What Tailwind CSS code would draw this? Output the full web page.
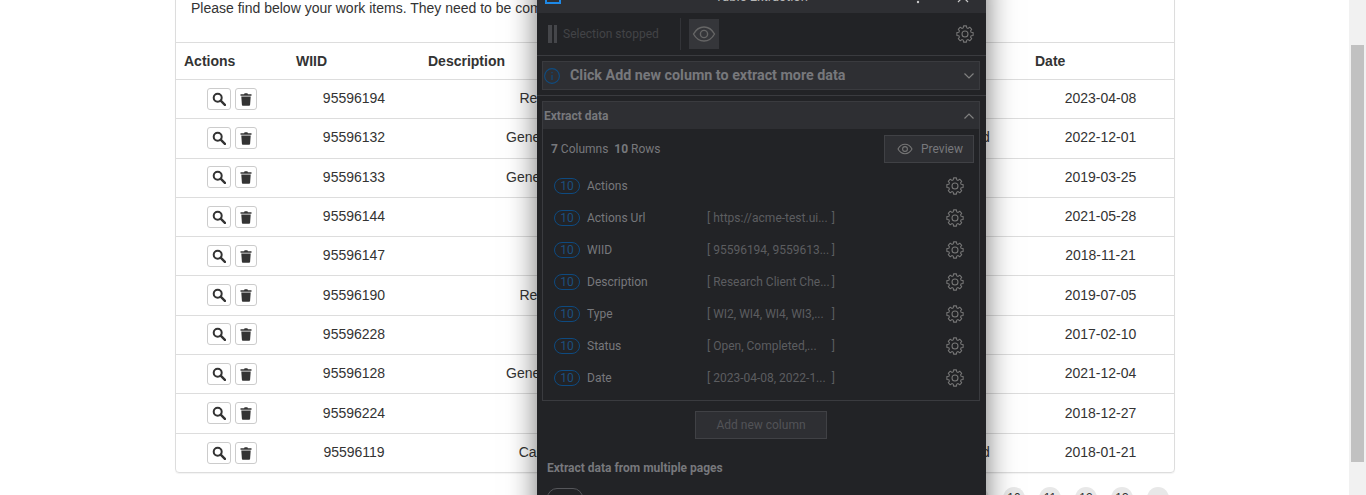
<!doctype html>
<html>
<head>
<meta charset="utf-8">
<script src="https://cdn.jsdelivr.net/npm/@tailwindcss/browser@4"></script>
<title>Work items</title>
</head>
<body class="h-[495px] overflow-hidden bg-white">
<div class="flex h-[495px] overflow-hidden">
  <main class="relative flex-1 overflow-hidden font-['Liberation_Sans',Arial,sans-serif] text-sm text-[#333]">
    <div class="ml-[175px] mt-[-31px] w-[1000px] rounded-[4px] border border-[#ddd] shadow-[0_1px_1px_rgba(0,0,0,0.05)]">
      <div class="h-[73px] border-b border-[#ddd] px-[15px] pt-[28px] leading-5 whitespace-nowrap">Please find below your work items. They need to be completed in the given order.</div>
      <div class="grid h-[37px] grid-cols-[112px_132px_342px_125px_140px_147px] items-center border-b border-[#ddd] font-bold">
        <div class="pl-2">Actions</div><div class="pl-2">WIID</div><div class="pl-2">Description</div><div class="pl-2">Type</div><div class="pl-2">Status</div><div class="pl-2">Date</div>
      </div>
      <div class="grid h-[39.3px] grid-cols-[112px_132px_342px_125px_140px_147px] items-center border-b border-[#ddd] pb-[2px] text-center">
        <div class="mt-px flex justify-center gap-1"><button class="flex h-[22px] w-6 items-center justify-center rounded-[3px] border border-[#ccc]"><svg class="h-3.5 w-3.5" viewBox="0 0 14 14" fill="none" stroke="#333" stroke-width="2"><circle cx="5.7" cy="5.7" r="4"/><path d="M8.7 8.700l4.200 4.200" stroke-linecap="round" stroke-width="2.400"/></svg></button><button class="flex h-[22px] w-[22px] items-center justify-center rounded-[3px] border border-[#ccc]"><svg class="h-3.5 w-3.5" viewBox="0 0 14 14" fill="#333"><path d="M1.500 2.200h3.600l.5-1h2.800l.5 1h3.600v1.600h-11zM2.300 4.600h9.400l-.6 8.200c0 .5-.4.9-.9.9H3.800c-.5 0-.9-.4-.9-.9z"/></svg></button></div>
        <div>95596194</div><div>Research Client Check</div><div>WI2</div><div>Open</div><div>2023-04-08</div>
      </div>
      <div class="grid h-[39.3px] grid-cols-[112px_132px_342px_125px_140px_147px] items-center border-b border-[#ddd] pb-[2px] text-center">
        <div class="mt-px flex justify-center gap-1"><button class="flex h-[22px] w-6 items-center justify-center rounded-[3px] border border-[#ccc]"><svg class="h-3.5 w-3.5" viewBox="0 0 14 14" fill="none" stroke="#333" stroke-width="2"><circle cx="5.7" cy="5.7" r="4"/><path d="M8.7 8.700l4.200 4.200" stroke-linecap="round" stroke-width="2.400"/></svg></button><button class="flex h-[22px] w-[22px] items-center justify-center rounded-[3px] border border-[#ccc]"><svg class="h-3.5 w-3.5" viewBox="0 0 14 14" fill="#333"><path d="M1.500 2.200h3.600l.5-1h2.800l.5 1h3.600v1.600h-11zM2.300 4.600h9.400l-.6 8.200c0 .5-.4.9-.9.9H3.800c-.5 0-.9-.4-.9-.9z"/></svg></button></div>
        <div>95596132</div><div class="pr-1">Generate Client Statement</div><div>WI4</div><div class="pr-[2px]">Completed</div><div>2022-12-01</div>
      </div>
      <div class="grid h-[39.3px] grid-cols-[112px_132px_342px_125px_140px_147px] items-center border-b border-[#ddd] pb-[2px] text-center">
        <div class="mt-px flex justify-center gap-1"><button class="flex h-[22px] w-6 items-center justify-center rounded-[3px] border border-[#ccc]"><svg class="h-3.5 w-3.5" viewBox="0 0 14 14" fill="none" stroke="#333" stroke-width="2"><circle cx="5.7" cy="5.7" r="4"/><path d="M8.7 8.700l4.200 4.200" stroke-linecap="round" stroke-width="2.400"/></svg></button><button class="flex h-[22px] w-[22px] items-center justify-center rounded-[3px] border border-[#ccc]"><svg class="h-3.5 w-3.5" viewBox="0 0 14 14" fill="#333"><path d="M1.500 2.200h3.600l.5-1h2.800l.5 1h3.600v1.600h-11zM2.300 4.600h9.400l-.6 8.200c0 .5-.4.9-.9.9H3.800c-.5 0-.9-.4-.9-.9z"/></svg></button></div>
        <div>95596133</div><div class="pr-1">Generate Client Statement</div><div>WI4</div><div>Open</div><div>2019-03-25</div>
      </div>
      <div class="grid h-[39.3px] grid-cols-[112px_132px_342px_125px_140px_147px] items-center border-b border-[#ddd] pb-[2px] text-center">
        <div class="mt-px flex justify-center gap-1"><button class="flex h-[22px] w-6 items-center justify-center rounded-[3px] border border-[#ccc]"><svg class="h-3.5 w-3.5" viewBox="0 0 14 14" fill="none" stroke="#333" stroke-width="2"><circle cx="5.7" cy="5.7" r="4"/><path d="M8.7 8.700l4.200 4.200" stroke-linecap="round" stroke-width="2.400"/></svg></button><button class="flex h-[22px] w-[22px] items-center justify-center rounded-[3px] border border-[#ccc]"><svg class="h-3.5 w-3.5" viewBox="0 0 14 14" fill="#333"><path d="M1.500 2.200h3.600l.5-1h2.800l.5 1h3.600v1.600h-11zM2.300 4.600h9.400l-.6 8.200c0 .5-.4.9-.9.9H3.800c-.5 0-.9-.4-.9-.9z"/></svg></button></div>
        <div>95596144</div><div>Client Check</div><div>WI3</div><div>Open</div><div>2021-05-28</div>
      </div>
      <div class="grid h-[39.3px] grid-cols-[112px_132px_342px_125px_140px_147px] items-center border-b border-[#ddd] pb-[2px] text-center">
        <div class="mt-px flex justify-center gap-1"><button class="flex h-[22px] w-6 items-center justify-center rounded-[3px] border border-[#ccc]"><svg class="h-3.5 w-3.5" viewBox="0 0 14 14" fill="none" stroke="#333" stroke-width="2"><circle cx="5.7" cy="5.7" r="4"/><path d="M8.7 8.700l4.200 4.200" stroke-linecap="round" stroke-width="2.400"/></svg></button><button class="flex h-[22px] w-[22px] items-center justify-center rounded-[3px] border border-[#ccc]"><svg class="h-3.5 w-3.5" viewBox="0 0 14 14" fill="#333"><path d="M1.500 2.200h3.600l.5-1h2.800l.5 1h3.600v1.600h-11zM2.300 4.600h9.400l-.6 8.200c0 .5-.4.9-.9.9H3.800c-.5 0-.9-.4-.9-.9z"/></svg></button></div>
        <div>95596147</div><div>Client Check</div><div>WI1</div><div>Open</div><div>2018-11-21</div>
      </div>
      <div class="grid h-[39.3px] grid-cols-[112px_132px_342px_125px_140px_147px] items-center border-b border-[#ddd] pb-[2px] text-center">
        <div class="mt-px flex justify-center gap-1"><button class="flex h-[22px] w-6 items-center justify-center rounded-[3px] border border-[#ccc]"><svg class="h-3.5 w-3.5" viewBox="0 0 14 14" fill="none" stroke="#333" stroke-width="2"><circle cx="5.7" cy="5.7" r="4"/><path d="M8.7 8.700l4.200 4.200" stroke-linecap="round" stroke-width="2.400"/></svg></button><button class="flex h-[22px] w-[22px] items-center justify-center rounded-[3px] border border-[#ccc]"><svg class="h-3.5 w-3.5" viewBox="0 0 14 14" fill="#333"><path d="M1.500 2.200h3.600l.5-1h2.800l.5 1h3.600v1.600h-11zM2.300 4.600h9.400l-.6 8.200c0 .5-.4.9-.9.9H3.800c-.5 0-.9-.4-.9-.9z"/></svg></button></div>
        <div>95596190</div><div>Research Client Check</div><div>WI2</div><div>Open</div><div>2019-07-05</div>
      </div>
      <div class="grid h-[39.3px] grid-cols-[112px_132px_342px_125px_140px_147px] items-center border-b border-[#ddd] pb-[2px] text-center">
        <div class="mt-px flex justify-center gap-1"><button class="flex h-[22px] w-6 items-center justify-center rounded-[3px] border border-[#ccc]"><svg class="h-3.5 w-3.5" viewBox="0 0 14 14" fill="none" stroke="#333" stroke-width="2"><circle cx="5.7" cy="5.7" r="4"/><path d="M8.7 8.700l4.200 4.200" stroke-linecap="round" stroke-width="2.400"/></svg></button><button class="flex h-[22px] w-[22px] items-center justify-center rounded-[3px] border border-[#ccc]"><svg class="h-3.5 w-3.5" viewBox="0 0 14 14" fill="#333"><path d="M1.500 2.200h3.600l.5-1h2.800l.5 1h3.600v1.600h-11zM2.300 4.600h9.400l-.6 8.200c0 .5-.4.9-.9.9H3.800c-.5 0-.9-.4-.9-.9z"/></svg></button></div>
        <div>95596228</div><div>Client Check</div><div>WI3</div><div>Open</div><div>2017-02-10</div>
      </div>
      <div class="grid h-[39.3px] grid-cols-[112px_132px_342px_125px_140px_147px] items-center border-b border-[#ddd] pb-[2px] text-center">
        <div class="mt-px flex justify-center gap-1"><button class="flex h-[22px] w-6 items-center justify-center rounded-[3px] border border-[#ccc]"><svg class="h-3.5 w-3.5" viewBox="0 0 14 14" fill="none" stroke="#333" stroke-width="2"><circle cx="5.7" cy="5.7" r="4"/><path d="M8.7 8.700l4.200 4.200" stroke-linecap="round" stroke-width="2.400"/></svg></button><button class="flex h-[22px] w-[22px] items-center justify-center rounded-[3px] border border-[#ccc]"><svg class="h-3.5 w-3.5" viewBox="0 0 14 14" fill="#333"><path d="M1.500 2.200h3.600l.5-1h2.800l.5 1h3.600v1.600h-11zM2.300 4.600h9.400l-.6 8.200c0 .5-.4.9-.9.9H3.800c-.5 0-.9-.4-.9-.9z"/></svg></button></div>
        <div>95596128</div><div class="pr-1">Generate Client Statement</div><div>WI5</div><div>Open</div><div>2021-12-04</div>
      </div>
      <div class="grid h-[39.3px] grid-cols-[112px_132px_342px_125px_140px_147px] items-center border-b border-[#ddd] pb-[2px] text-center">
        <div class="mt-px flex justify-center gap-1"><button class="flex h-[22px] w-6 items-center justify-center rounded-[3px] border border-[#ccc]"><svg class="h-3.5 w-3.5" viewBox="0 0 14 14" fill="none" stroke="#333" stroke-width="2"><circle cx="5.7" cy="5.7" r="4"/><path d="M8.7 8.700l4.200 4.200" stroke-linecap="round" stroke-width="2.400"/></svg></button><button class="flex h-[22px] w-[22px] items-center justify-center rounded-[3px] border border-[#ccc]"><svg class="h-3.5 w-3.5" viewBox="0 0 14 14" fill="#333"><path d="M1.500 2.200h3.600l.5-1h2.800l.5 1h3.600v1.600h-11zM2.300 4.600h9.400l-.6 8.200c0 .5-.4.9-.9.9H3.800c-.5 0-.9-.4-.9-.9z"/></svg></button></div>
        <div>95596224</div><div>Client Check</div><div>WI1</div><div>Open</div><div>2018-12-27</div>
      </div>
      <div class="grid h-[38.3px] grid-cols-[112px_132px_342px_125px_140px_147px] items-center pb-[1px] text-center">
        <div class="mt-px flex justify-center gap-1"><button class="flex h-[22px] w-6 items-center justify-center rounded-[3px] border border-[#ccc]"><svg class="h-3.5 w-3.5" viewBox="0 0 14 14" fill="none" stroke="#333" stroke-width="2"><circle cx="5.7" cy="5.7" r="4"/><path d="M8.7 8.700l4.200 4.200" stroke-linecap="round" stroke-width="2.400"/></svg></button><button class="flex h-[22px] w-[22px] items-center justify-center rounded-[3px] border border-[#ccc]"><svg class="h-3.5 w-3.5" viewBox="0 0 14 14" fill="#333"><path d="M1.500 2.200h3.600l.5-1h2.800l.5 1h3.600v1.600h-11zM2.300 4.600h9.400l-.6 8.200c0 .5-.4.9-.9.9H3.800c-.5 0-.9-.4-.9-.9z"/></svg></button></div>
        <div>95596119</div><div class="pr-[10px]">Calculate Client Hash</div><div>WI2</div><div class="pr-[2px]">Completed</div><div>2018-01-21</div>
      </div>
    </div>
    <div class="ml-[967px] mt-[14px] flex gap-[14px] text-center text-xs leading-[22px]">
      <span class="h-[22px] w-[22px] rounded-full bg-[#e8e8e8]">9</span><span class="h-[22px] w-[22px] rounded-full bg-[#e8e8e8]">10</span><span class="h-[22px] w-[22px] rounded-full bg-[#e8e8e8]">11</span><span class="h-[22px] w-[22px] rounded-full bg-[#e8e8e8]">12</span><span class="h-[22px] w-[22px] rounded-full bg-[#e8e8e8]">13</span><span class="h-[22px] w-[22px] rounded-full bg-[#e8e8e8]"></span>
    </div>

    <section class="absolute left-[537px] top-[-27px] h-[560px] w-[449px] bg-[#222326] font-['Roboto',sans-serif] text-xs shadow-[0_0_28px_rgba(0,0,0,0.55)]">
      <header class="relative flex h-10 items-end justify-center bg-[#2e2f33] pb-2 text-[13px] text-[#b5b5b5]">
        <svg class="absolute bottom-[9px] left-2 h-4 w-4" viewBox="0 0 16 16" fill="none" stroke="#1e88e5" stroke-width="2"><rect x="1" y="1" width="14" height="14"/><path d="M5 5v6h3"/></svg>
        <span>Table Extraction</span>
        <svg class="absolute bottom-2 left-[379px] h-4 w-1" viewBox="0 0 4 16" fill="#c8c8c8"><circle cx="2" cy="3" r="1.200"/><circle cx="2" cy="8" r="1.200"/><circle cx="2" cy="13" r="1.200"/></svg>
        <svg class="absolute bottom-[10px] left-[420px] h-3 w-3" viewBox="0 0 12 12" stroke="#c8c8c8" stroke-width="1.200"><path d="M1 1l10 10M11 1L1 11"/></svg>
      </header>
      <div class="flex h-[43px] items-center border-b border-[#3a3b3f] pl-[11px] pr-3">
        <div class="flex h-[18px] w-[9px] justify-between"><span class="w-[3.5px] bg-[#45464a]"></span><span class="w-[3.5px] bg-[#45464a]"></span></div>
        <span class="ml-1.5 w-[95px] whitespace-nowrap text-xs text-[#424347]">Selection stopped</span>
        <span class="ml-[22px] h-8 w-px bg-[#333438]"></span>
        <span class="ml-2 flex h-[30px] w-[30px] items-center justify-center bg-[#35363a]">
          <svg class="h-[24px] w-[24px]" viewBox="0 0 24 24" fill="none" stroke="#666" stroke-width="1.400"><path d="M1.500 12C4 7.500 7.500 5 12 5s8 2.500 10.500 7C20 16.500 16.500 19 12 19S4 16.500 1.500 12z"/><circle cx="12" cy="12" r="3.600"/></svg>
        </span>
        <svg class="ml-auto h-[18px] w-[18px]" viewBox="0 0 24 24" fill="none" stroke="#777" stroke-width="1.400" stroke-linejoin="round"><path d="M9.660 3.830L10.090 1.170H13.910L14.340 3.830L16.120 4.570L18.310 2.990L21.010 5.690L19.430 7.880L20.170 9.660L22.830 10.090V13.910L20.170 14.340L19.430 16.120L21.010 18.310L18.310 21.010L16.120 19.430L14.340 20.170L13.910 22.830H10.090L9.660 20.170L7.880 19.430L5.690 21.010L2.990 18.310L4.570 16.120L3.830 14.340L1.170 13.910V10.090L3.830 9.660L4.570 7.880L2.990 5.690L5.690 2.990L7.880 4.570Z"/><circle cx="12" cy="12" r="4"/></svg>
      </div>
      <div class="ml-[5px] mr-[6px] mt-[5px] flex h-[29px] items-center border border-[#3a3b3f] bg-[#2e2f33] pr-[4px]">
        <svg class="ml-px h-4 w-4" viewBox="0 0 16 16" fill="none" stroke="#0f4c81" stroke-width="1.100"><circle cx="8" cy="8" r="7.400"/><path d="M8 7v5M8 4v1.200"/></svg>
        <span class="ml-[10px] text-[14.3px] font-bold text-[#77787c]">Click Add new column to extract more data</span>
        <svg class="ml-auto h-3 w-3" viewBox="0 0 12 12" fill="none" stroke="#808080" stroke-width="1.200"><path d="M1.500 3.500 6 8l4.500-4.500"/></svg>
      </div>
      <div class="mt-[5px] h-px bg-[#3a3b3f]"></div>
      <div class="ml-[5px] mr-[6px] mt-[5px] h-[300px] border border-[#3a3b3f]">
        <div class="flex h-[27px] items-center bg-[#2e2f33] pl-px pr-1">
          <span class="font-bold text-[#77787c]">Extract data</span>
          <svg class="ml-auto h-3 w-3" viewBox="0 0 12 12" fill="none" stroke="#808080" stroke-width="1.200"><path d="M1.500 8.500 6 4l4.500 4.500"/></svg>
        </div>
        <div class="flex h-[40px] items-center justify-between pl-2 pr-[5px] text-[#77787c]">
          <span><b>7</b> Columns &nbsp;<b>10</b> Rows</span>
          <span class="flex h-7 w-[90px] items-center border border-[#404145] bg-[#2e2f33] pl-3">
            <svg class="h-4 w-4" viewBox="0 0 24 24" fill="none" stroke="#777" stroke-width="1.600"><path d="M1.500 12C4 7.500 7.500 5 12 5s8 2.500 10.500 7C20 16.500 16.500 19 12 19S4 16.500 1.500 12z"/><circle cx="12" cy="12" r="3.600"/></svg>
            <span class="ml-2">Preview</span>
          </span>
        </div>
        <ul class="pl-[11px] pr-[15px] pt-[1px] text-[#77787c]">
          <li class="flex h-8 items-center"><span class="flex h-4 w-[26px] items-center justify-center rounded-full border border-[#0e4a80] text-[#1d4f7e]">10</span><span class="ml-[7px] w-[120px]">Actions</span><span class="w-[128px]"></span><svg class="ml-auto h-[18px] w-[18px]" viewBox="0 0 24 24" fill="none" stroke="#777" stroke-width="1.400" stroke-linejoin="round"><path d="M9.660 3.830L10.090 1.170H13.910L14.340 3.830L16.120 4.570L18.310 2.990L21.010 5.690L19.430 7.880L20.170 9.660L22.830 10.090V13.910L20.170 14.340L19.430 16.120L21.010 18.310L18.310 21.010L16.120 19.430L14.340 20.170L13.910 22.830H10.090L9.660 20.170L7.880 19.430L5.690 21.010L2.990 18.310L4.570 16.120L3.830 14.340L1.170 13.910V10.090L3.830 9.660L4.570 7.880L2.990 5.690L5.690 2.990L7.880 4.570Z"/><circle cx="12" cy="12" r="4"/></svg></li>
          <li class="flex h-8 items-center"><span class="flex h-4 w-[26px] items-center justify-center rounded-full border border-[#0e4a80] text-[#1d4f7e]">10</span><span class="ml-[7px] w-[120px]">Actions Url</span><span class="flex w-[128px] justify-between whitespace-nowrap text-[#5c5d60]"><span>[ https://acme-test.ui...</span><span>]</span></span><svg class="ml-auto h-[18px] w-[18px]" viewBox="0 0 24 24" fill="none" stroke="#777" stroke-width="1.400" stroke-linejoin="round"><path d="M9.660 3.830L10.090 1.170H13.910L14.340 3.830L16.120 4.570L18.310 2.990L21.010 5.690L19.430 7.880L20.170 9.660L22.830 10.090V13.910L20.170 14.340L19.430 16.120L21.010 18.310L18.310 21.010L16.120 19.430L14.340 20.170L13.910 22.830H10.090L9.660 20.170L7.880 19.430L5.690 21.010L2.990 18.310L4.570 16.120L3.830 14.340L1.170 13.910V10.090L3.830 9.660L4.570 7.880L2.990 5.690L5.690 2.990L7.880 4.570Z"/><circle cx="12" cy="12" r="4"/></svg></li>
          <li class="flex h-8 items-center"><span class="flex h-4 w-[26px] items-center justify-center rounded-full border border-[#0e4a80] text-[#1d4f7e]">10</span><span class="ml-[7px] w-[120px]">WIID</span><span class="flex w-[128px] justify-between whitespace-nowrap text-[#5c5d60]"><span>[ 95596194, 9559613...</span><span>]</span></span><svg class="ml-auto h-[18px] w-[18px]" viewBox="0 0 24 24" fill="none" stroke="#777" stroke-width="1.400" stroke-linejoin="round"><path d="M9.660 3.830L10.090 1.170H13.910L14.340 3.830L16.120 4.570L18.310 2.990L21.010 5.690L19.430 7.880L20.170 9.660L22.830 10.090V13.910L20.170 14.340L19.430 16.120L21.010 18.310L18.310 21.010L16.120 19.430L14.340 20.170L13.910 22.830H10.090L9.660 20.170L7.880 19.430L5.690 21.010L2.990 18.310L4.570 16.120L3.830 14.340L1.170 13.910V10.090L3.830 9.660L4.570 7.880L2.990 5.690L5.690 2.990L7.880 4.570Z"/><circle cx="12" cy="12" r="4"/></svg></li>
          <li class="flex h-8 items-center"><span class="flex h-4 w-[26px] items-center justify-center rounded-full border border-[#0e4a80] text-[#1d4f7e]">10</span><span class="ml-[7px] w-[120px]">Description</span><span class="flex w-[128px] justify-between whitespace-nowrap text-[#5c5d60]"><span>[ Research Client Che...</span><span>]</span></span><svg class="ml-auto h-[18px] w-[18px]" viewBox="0 0 24 24" fill="none" stroke="#777" stroke-width="1.400" stroke-linejoin="round"><path d="M9.660 3.830L10.090 1.170H13.910L14.340 3.830L16.120 4.570L18.310 2.990L21.010 5.690L19.430 7.880L20.170 9.660L22.830 10.090V13.910L20.170 14.340L19.430 16.120L21.010 18.310L18.310 21.010L16.120 19.430L14.340 20.170L13.910 22.830H10.090L9.660 20.170L7.880 19.430L5.690 21.010L2.990 18.310L4.570 16.120L3.830 14.340L1.170 13.910V10.090L3.830 9.660L4.570 7.880L2.990 5.690L5.690 2.990L7.880 4.570Z"/><circle cx="12" cy="12" r="4"/></svg></li>
          <li class="flex h-8 items-center"><span class="flex h-4 w-[26px] items-center justify-center rounded-full border border-[#0e4a80] text-[#1d4f7e]">10</span><span class="ml-[7px] w-[120px]">Type</span><span class="flex w-[128px] justify-between whitespace-nowrap text-[#5c5d60]"><span>[ WI2, WI4, WI4, WI3,...</span><span>]</span></span><svg class="ml-auto h-[18px] w-[18px]" viewBox="0 0 24 24" fill="none" stroke="#777" stroke-width="1.400" stroke-linejoin="round"><path d="M9.660 3.830L10.090 1.170H13.910L14.340 3.830L16.120 4.570L18.310 2.990L21.010 5.690L19.430 7.880L20.170 9.660L22.830 10.090V13.910L20.170 14.340L19.430 16.120L21.010 18.310L18.310 21.010L16.120 19.430L14.340 20.170L13.910 22.830H10.090L9.660 20.170L7.880 19.430L5.690 21.010L2.990 18.310L4.570 16.120L3.830 14.340L1.170 13.910V10.090L3.830 9.660L4.570 7.880L2.990 5.690L5.690 2.990L7.880 4.570Z"/><circle cx="12" cy="12" r="4"/></svg></li>
          <li class="flex h-8 items-center"><span class="flex h-4 w-[26px] items-center justify-center rounded-full border border-[#0e4a80] text-[#1d4f7e]">10</span><span class="ml-[7px] w-[120px]">Status</span><span class="flex w-[128px] justify-between whitespace-nowrap text-[#5c5d60]"><span>[ Open, Completed,...</span><span>]</span></span><svg class="ml-auto h-[18px] w-[18px]" viewBox="0 0 24 24" fill="none" stroke="#777" stroke-width="1.400" stroke-linejoin="round"><path d="M9.660 3.830L10.090 1.170H13.910L14.340 3.830L16.120 4.570L18.310 2.990L21.010 5.690L19.430 7.880L20.170 9.660L22.830 10.090V13.910L20.170 14.340L19.430 16.120L21.010 18.310L18.310 21.010L16.120 19.430L14.340 20.170L13.910 22.830H10.090L9.660 20.170L7.880 19.430L5.690 21.010L2.990 18.310L4.570 16.120L3.830 14.340L1.170 13.910V10.090L3.830 9.660L4.570 7.880L2.990 5.690L5.690 2.990L7.880 4.570Z"/><circle cx="12" cy="12" r="4"/></svg></li>
          <li class="flex h-8 items-center"><span class="flex h-4 w-[26px] items-center justify-center rounded-full border border-[#0e4a80] text-[#1d4f7e]">10</span><span class="ml-[7px] w-[120px]">Date</span><span class="flex w-[128px] justify-between whitespace-nowrap text-[#5c5d60]"><span>[ 2023-04-08, 2022-1...</span><span>]</span></span><svg class="ml-auto h-[18px] w-[18px]" viewBox="0 0 24 24" fill="none" stroke="#777" stroke-width="1.400" stroke-linejoin="round"><path d="M9.660 3.830L10.090 1.170H13.910L14.340 3.830L16.120 4.570L18.310 2.990L21.010 5.690L19.430 7.880L20.170 9.660L22.830 10.090V13.910L20.170 14.340L19.430 16.120L21.010 18.310L18.310 21.010L16.120 19.430L14.340 20.170L13.910 22.830H10.090L9.660 20.170L7.880 19.430L5.690 21.010L2.990 18.310L4.570 16.120L3.830 14.340L1.170 13.910V10.090L3.830 9.660L4.570 7.880L2.990 5.690L5.690 2.990L7.880 4.570Z"/><circle cx="12" cy="12" r="4"/></svg></li>
        </ul>
      </div>
      <div class="ml-[158px] mt-[10px] flex h-7 w-[132px] items-center justify-center border border-[#404145] bg-[#2e2f33] text-[#525357]">Add new column</div>
      <div class="ml-[10px] mt-[21px] font-bold text-[#77787c]">Extract data from multiple pages</div>
      <div class="ml-[10px] mt-[12px] h-5 w-9 rounded-full border border-[#55565a]"></div>
    </section>
  </main>
  <aside class="w-[17px] shrink-0 bg-[#f1f1f1] pl-0.5 pr-0.5 pt-[45px]"><div class="h-[417px] bg-[#c1c1c1]"></div></aside>
</div>
</body>
</html>
